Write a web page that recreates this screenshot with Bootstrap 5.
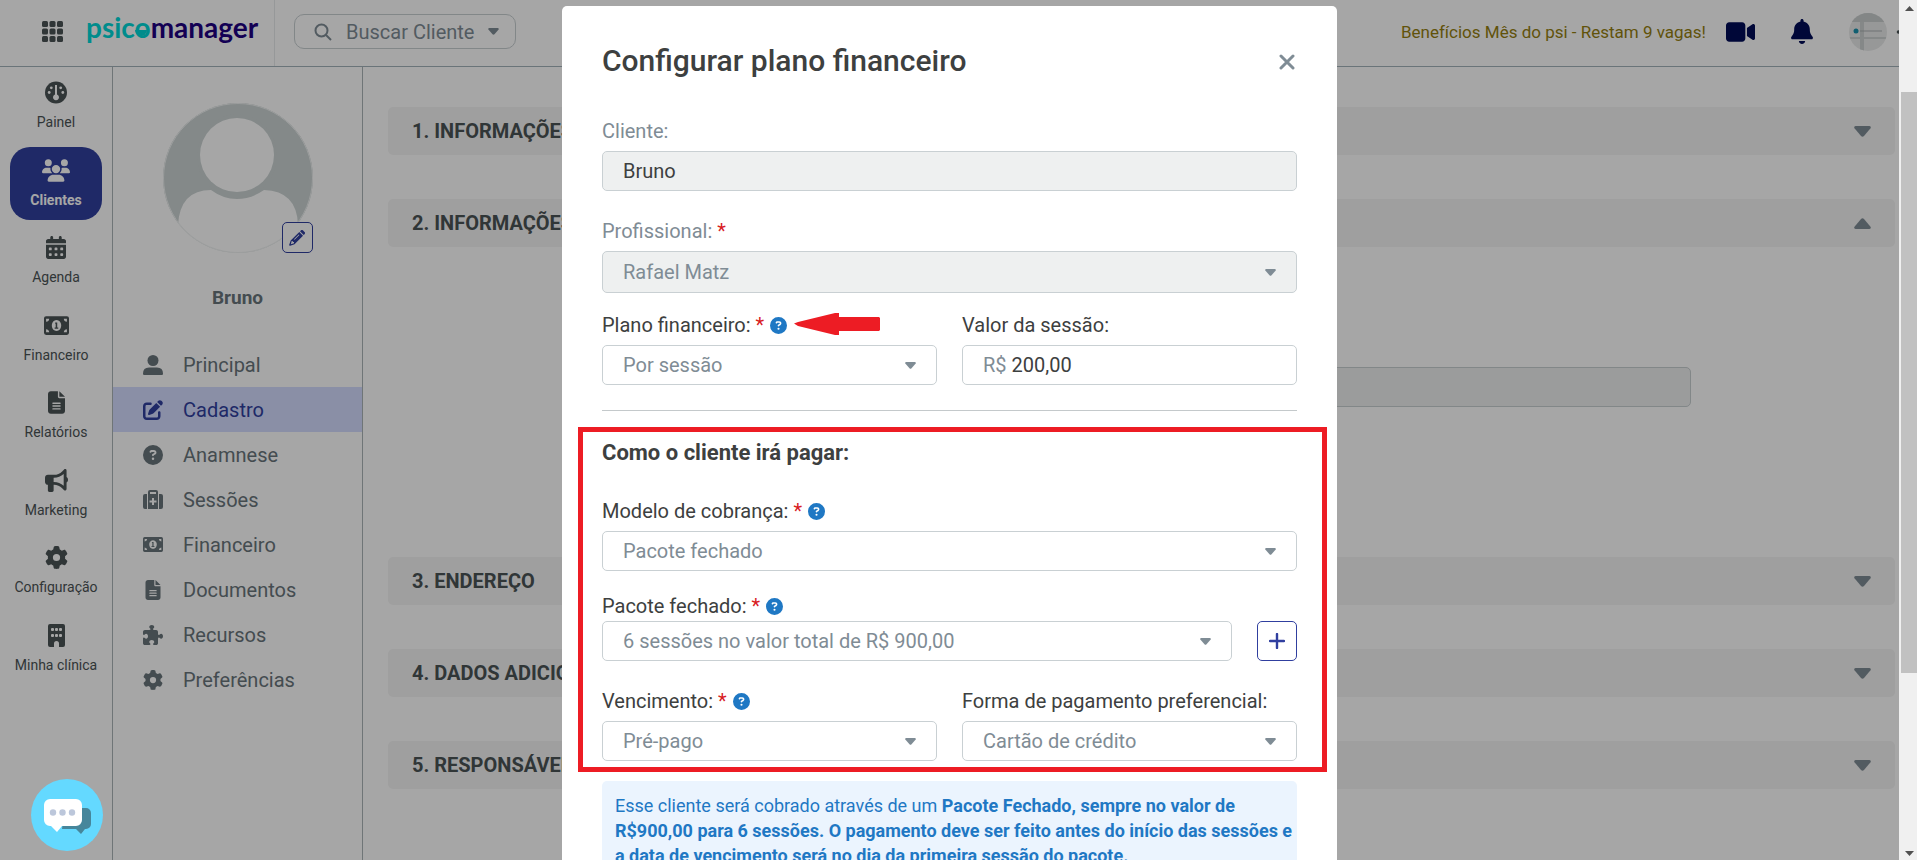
<!DOCTYPE html>
<html lang="pt-BR">
<head>
<meta charset="utf-8">
<meta name="viewport" content="width=device-width, initial-scale=1">
<title>Psicomanager - Cadastro do cliente</title>
<link rel="stylesheet" href="https://cdn.jsdelivr.net/npm/bootstrap@5.3.0/dist/css/bootstrap.min.css">
<style>
:root{--ink:#3d4040;--muted:#7f8c95;--brand:#303f9f;--line:#c9d0d3;--info:#1f78c4;--alerta:#ed1c24}
body{font-family:Roboto,"Liberation Sans",sans-serif;font-size:20px;line-height:24px;color:var(--ink)}
a{text-decoration:none;color:inherit}
svg{display:block;flex:none;fill:currentColor}
.topbar{height:67px;border-bottom:1px solid #a3b2ba}
.brandzone{width:275px;height:66px;border-right:1px solid #e6eaec;padding:0 0 4px 42px;gap:23px;color:#4b5355}
.search{width:222px;height:35px;margin:0 0 3px 19px;border:1px solid #c8cfd2;border-radius:10px;color:var(--muted);padding:0 19px;gap:14px;background:#fff}
.userzone{margin-bottom:3px}
.promo{font-size:17px;color:#968010}
.navy{color:#000c57}
.sidebar{width:113px;border-right:1px solid #abb4b7;color:#4b5355}
.sidelist{height:616px;margin-top:2px}
.sideitem{width:92px;height:73px;border-radius:20px;font-size:14px;line-height:20px;gap:8px;padding-top:2px;white-space:nowrap}
.sideitem.active{background:var(--brand);color:#fff;font-weight:700}
.profile{width:250px;border-right:1px solid #abb4b7;color:#69757b}
.photo{width:150px;margin-top:36px}
.editbtn{right:0;bottom:0;width:31px;height:31px;border:1px solid var(--brand);border-radius:5px;background:#fff;color:var(--brand)}
.person{font-size:19px;font-weight:700;margin:33px 0 32px}
.menuitem{height:45px;padding-left:30px;gap:20px}
.menuitem.active{background:#d4dcff;color:var(--brand)}
.menuitem svg{width:20px}
.secbar{width:100%;height:48px;border:0;border-radius:5px;background:#f5f5f5;color:#4b5355;font-weight:700;font-size:20px;padding:0 24px}
.secbar svg{color:var(--muted)}
.content-area{padding:40px 4px 0 25px}
.secgap{display:grid;gap:44px}
.secbody{height:310px;padding-top:120px;padding-right:204px}
.hiddenfield{height:40px;width:60%;background:#eef0f0;border:1px solid #c8cfd2;border-radius:5px}
.shade{background:rgba(0,0,0,.35);z-index:10}
.scrolltrack{width:18px;background:#f0f0f0;z-index:20;padding:6px 0 4px 2px;color:#505050}
.scrollthumb{height:581px;margin-top:81px;width:100%;background:#c1c1c1}
.stage{right:18px;z-index:15}
.plan{max-width:775px;margin:6px auto 0}
.plan .modal-content{background:#fff;color:var(--ink);border:0;border-radius:5px;padding:37px 40px 40px}
.plan h1{font-size:30px;line-height:36px;font-weight:500;margin:0 0 40px}
.plan h2{font-size:22px;line-height:26px;font-weight:700;margin:0 0 33px}
.closebtn{border:0;background:none;padding:0;color:var(--muted);width:20px;height:38px}
.labelrow{display:flex;align-items:center;gap:6px;margin-bottom:8px;height:24px}
.labelrow b{color:#d8201f;font-weight:400}
.labelrow svg{color:var(--info)}
.labelrow .pointer{color:var(--alerta);align-self:flex-start;margin-left:1px}
.soft{color:var(--muted)}
.apart{margin-top:28px}
.near{margin-top:20px}
.closer{margin-top:23px}
.tight{margin-bottom:3px}
.plan .form-control,.plan .form-select{height:40px;border:1px solid var(--line);border-radius:5px;padding:0 20px;font-size:20px;line-height:24px;color:var(--ink);box-shadow:none}
.plan .form-select{color:var(--muted);background:#fff url("data:image/svg+xml,%3Csvg xmlns='http://www.w3.org/2000/svg' viewBox='0 0 11 7'%3E%3Cpath fill='%237f8c95' d='M1 0h9q1.500 .6 .5 1.800L6.500 6.200q-1 1-2 0L.5 1.800Q-.5.600 1 0z'/%3E%3C/svg%3E") no-repeat right 20px center/11px 7px;padding-right:40px}
.plan .form-control:disabled,.plan .form-select:disabled{background-color:#eef0f0;opacity:1}
.plan .tall{height:42px}
.money{border:1px solid var(--line);border-radius:5px;height:40px;padding:0 20px;color:var(--muted);gap:5px}
.money input{border:0;padding:0;outline:0;min-width:0;background:none;color:var(--ink)}
.cols{display:grid;grid-template-columns:1fr 1fr;column-gap:25px}
.withbtn{gap:25px}
.plan hr{margin:25px 0 29px;border-top:1px solid #c4c9cb;opacity:1}
.addbtn{width:40px;height:40px;border:1px solid var(--brand);border-radius:5px;background:#fff;color:var(--brand)}
.marker{inset:-13px -30px -11px -24px;border:5px solid var(--alerta);pointer-events:none}
.notice{background:#ebf4fe;color:var(--info);border-radius:5px;margin-top:20px;padding:12px 4px 13px 13px;font-size:18px;line-height:25px}
.chat{left:31px;bottom:9px;z-index:16;width:72px;height:72px;border:0;padding:0;background:none}
</style>
</head>
<body class="vh-100 overflow-hidden bg-white">
<svg width="0" height="0" class="position-absolute" aria-hidden="true">
<symbol id="help" viewBox="0 0 512 512"><path d="M256 512A256 256 0 1 0 256 0a256 256 0 1 0 0 512zM169.800 165.300c7.900-22.300 29.100-37.300 52.800-37.300h58.300c34.900 0 63.100 28.300 63.100 63.100c0 22.600-12.100 43.500-31.700 54.800L280 264.400c-.2 13-10.900 23.600-24 23.600c-13.300 0-24-10.700-24-24V250.500c0-8.600 4.600-16.500 12.100-20.800l44.300-25.400c4.700-2.700 7.600-7.700 7.600-13.100c0-8.400-6.800-15.100-15.100-15.100H222.600c-3.400 0-6.400 2.100-7.500 5.300l-.4 1.200c-4.400 12.500-18.200 19-30.600 14.600s-19-18.200-14.600-30.600l.4-1.200zM224 352a32 32 0 1 1 64 0 32 32 0 1 1 -64 0z"/></symbol>
<symbol id="file" viewBox="0 0 384 512"><path d="M64 0C28.700 0 0 28.700 0 64V448c0 35.300 28.700 64 64 64H320c35.300 0 64-28.700 64-64V160H256c-17.700 0-32-14.300-32-32V0H64zM256 0V128H384L256 0zM112 256H272c8.800 0 16 7.200 16 16s-7.200 16-16 16H112c-8.800 0-16-7.200-16-16s7.200-16 16-16zm0 64H272c8.800 0 16 7.200 16 16s-7.200 16-16 16H112c-8.800 0-16-7.200-16-16s7.200-16 16-16zm0 64H272c8.800 0 16 7.200 16 16s-7.200 16-16 16H112c-8.800 0-16-7.200-16-16s7.200-16 16-16z"/></symbol>
<symbol id="gear" viewBox="0 0 512 512"><path d="M495.900 166.600c3.200 8.700 .5 18.400-6.400 24.600l-43.300 39.400c1.100 8.300 1.700 16.800 1.700 25.400s-.6 17.100-1.700 25.400l43.300 39.400c6.900 6.200 9.600 15.900 6.400 24.600c-4.400 11.900-9.700 23.300-15.800 34.300l-4.700 8.100c-6.600 11-14 21.400-22.100 31.200c-5.900 7.200-15.700 9.600-24.500 6.800l-55.700-17.700c-13.400 10.300-28.200 18.900-44 25.400l-12.500 57.100c-2 9.100-9 16.300-18.200 17.800c-13.800 2.300-28 3.500-42.500 3.500s-28.700-1.200-42.500-3.500c-9.200-1.500-16.200-8.700-18.200-17.800l-12.500-57.100c-15.800-6.500-30.600-15.100-44-25.400L83.100 425.900c-8.800 2.800-18.600 .3-24.500-6.800c-8.100-9.800-15.500-20.200-22.100-31.200l-4.700-8.100c-6.100-11-11.400-22.400-15.800-34.300c-3.200-8.700-.5-18.400 6.400-24.600l43.300-39.400C64.600 273.100 64 264.600 64 256s.6-17.100 1.700-25.400L22.400 191.200c-6.900-6.200-9.600-15.900-6.400-24.600c4.400-11.900 9.700-23.300 15.800-34.300l4.700-8.100c6.600-11 14-21.400 22.100-31.200c5.900-7.200 15.700-9.600 24.500-6.800l55.700 17.700c13.400-10.300 28.200-18.900 44-25.400l12.500-57.100c2-9.100 9-16.300 18.200-17.800C227.300 1.200 241.500 0 256 0s28.700 1.200 42.500 3.500c9.200 1.500 16.200 8.700 18.200 17.800l12.500 57.100c15.800 6.500 30.600 15.100 44 25.400l55.700-17.700c8.800-2.800 18.600-.3 24.500 6.800c8.100 9.800 15.500 20.200 22.100 31.200l4.700 8.100c6.100 11 11.400 22.400 15.800 34.300zM256 336a80 80 0 1 0 0-160 80 80 0 1 0 0 160z"/></symbol>
<symbol id="cash" viewBox="0 0 24 18"><path fill-rule="evenodd" d="M2 0h20a2 2 0 0 1 2 2v14a2 2 0 0 1-2 2H2a2 2 0 0 1-2-2V2a2 2 0 0 1 2-2zm0 5.500Q4.800 5.300 5 2.500H2zm0 7v3h3Q4.800 12.700 2 12.500zM22 5.500v-3h-3Q19.200 5.300 22 5.500zM22 12.500Q19.200 12.700 19 15.500h3zM12 3.800a4.500 5.200 0 1 0 .01 0zM10.700 6h2v4.800h1v1.300h-3.500v-1.300h1V7.300h-.5z"/></symbol>
<symbol id="down" viewBox="0 0 17 11"><path d="M1.500 0h14q2 .8 1 2.200L10 10q-1.500 1.500-3 0L.5 2.200Q-.5.800 1.500 0z"/></symbol>
</svg>

<div class="d-flex h-100">
<div class="flex-grow-1 d-flex flex-column position-relative overflow-hidden">
  <header class="topbar d-flex align-items-center flex-shrink-0">
    <div class="brandzone d-flex align-items-center">
      <svg width="21" height="21" viewBox="0 0 21 21" aria-hidden="true"><g><rect width="6" height="6" rx="1.500"/><rect x="7.500" width="6" height="6" rx="1.500"/><rect x="15" width="6" height="6" rx="1.500"/><rect y="7.500" width="6" height="6" rx="1.500"/><rect x="7.500" y="7.500" width="6" height="6" rx="1.500"/><rect x="15" y="7.500" width="6" height="6" rx="1.500"/><rect y="15" width="6" height="6" rx="1.500"/><rect x="7.500" y="15" width="6" height="6" rx="1.500"/><rect x="15" y="15" width="6" height="6" rx="1.500"/></g></svg>
      <a href="#" aria-label="psicomanager"><svg width="180" height="44" viewBox="0 0 180 44" font-family="Lato,sans-serif" font-size="28" font-weight="700"><text y="29"><tspan fill="#00d7d7">psico</tspan><tspan fill="#200081">manager</tspan></text><path fill="#00d7d7" d="M49 21h12a6 6 0 0 1-12 0z"/></svg></a>
    </div>
    <button class="search d-flex align-items-center" type="button">
      <svg width="18" height="18" viewBox="0 0 18 18" stroke="currentColor" stroke-width="2"><circle cx="7.500" cy="7.500" r="6" fill="none"/><path d="M12 12l5 5"/></svg>
      <span class="flex-grow-1 text-start text-nowrap">Buscar Cliente</span>
      <svg width="11" height="7"><use href="#down"/></svg>
    </button>
    <div class="userzone ms-auto d-flex align-items-center">
      <a href="#" class="promo">Benefícios Mês do psi - Restam 9 vagas!</a>
      <a href="#" class="navy ms-3" aria-label="Vídeo"><svg class="ms-1 me-3" width="29" height="26" viewBox="0 0 576 512"><path d="M0 128C0 92.700 28.700 64 64 64H320c35.300 0 64 28.700 64 64V384c0 35.300-28.700 64-64 64H64c-35.300 0-64-28.700-64-64V128zM559.100 99.800c10.400 5.600 16.900 16.400 16.900 28.200V384c0 11.800-6.500 22.600-16.900 28.200s-23 5-32.900-1.600l-96-64L416 337.100V174.900l14.200-9.500 96-64c9.800-6.500 22.400-7.200 32.900-1.600z"/></svg></a>
      <a href="#" class="navy px-3 mx-1" aria-label="Notificações"><svg width="22" height="25" viewBox="0 0 448 512"><path d="M224 0c-17.700 0-32 14.300-32 32V51.200C119 66 64 130.600 64 208v18.800c0 47-17.300 92.400-48.500 127.600l-7.400 8.300c-8.400 9.400-10.400 22.900-5.300 34.400S19.400 416 32 416H416c12.600 0 24-7.400 29.200-18.900s3.100-25-5.300-34.400l-7.400-8.300C401.300 319.200 384 273.900 384 226.800V208c0-77.400-55-142-128-156.800V32c0-17.700-14.300-32-32-32zm45.300 493.300c12-12 18.700-28.300 18.700-45.300H160c0 17 6.700 33.300 18.700 45.300s28.300 18.700 45.300 18.700s33.300-6.700 45.300-18.700z"/></svg></a>
      <a href="#" class="ms-3" aria-label="Conta"><svg width="50" height="38" viewBox="0 0 50 38"><clipPath id="av"><circle cx="19" cy="19" r="19"/></clipPath><g clip-path="url(#av)"><path fill="#e9eaea" d="M0 0h38v38H0z"/><path fill="#c9cece" d="M0 0h38v9H0z"/><path fill="#cdd1d1" d="M11 9h4v29h-4zM0 24h38v2H0z"/><circle cx="7" cy="18" r="2.500" fill="#1b93ae"/><path fill="#a9b0b1" d="M11 17.500h22v1H11z"/></g><circle cx="49.500" cy="19" r="1.800" fill="#4b5355"/></svg></a>
    </div>
  </header>
  <div class="d-flex flex-grow-1">
    <nav class="sidebar flex-shrink-0">
      <div class="sidelist d-flex flex-column align-items-center justify-content-between">
        <a href="#" class="sideitem d-flex flex-column align-items-center justify-content-center"><svg width="22" height="23" viewBox="0 0 22 22"><circle cx="11" cy="11" r="11"/><g fill="#fff"><path d="M10 3.500h2v9.500a3 3 0 1 1-2 0z"/><circle cx="6.300" cy="6.300" r="1.400"/><circle cx="15.700" cy="6.300" r="1.400"/><circle cx="4.200" cy="11" r="1.400"/><circle cx="17.800" cy="11" r="1.400"/></g></svg>Painel</a>
        <a href="#" class="sideitem active d-flex flex-column align-items-center justify-content-center"><svg width="28" height="23" viewBox="0 0 640 512"><path d="M144 0a80 80 0 1 1 0 160A80 80 0 1 1 144 0zM512 0a80 80 0 1 1 0 160A80 80 0 1 1 512 0zM0 298.700C0 239.800 47.800 192 106.700 192h42.700c15.900 0 31 3.500 44.600 9.700c-1.300 7.200-1.900 14.700-1.900 22.300c0 38.200 16.800 72.500 43.300 96H21.300C9.600 320 0 310.400 0 298.700zM405.300 320c26.600-23.500 43.300-57.800 43.300-96c0-7.600-.7-15-1.900-22.300c13.600-6.300 28.700-9.700 44.600-9.700h42.700C592.200 192 640 239.800 640 298.700c0 11.800-9.600 21.300-21.300 21.300H405.300zM224 224a96 96 0 1 1 192 0 96 96 0 1 1 -192 0zM128 485.300C128 411.700 187.700 352 261.300 352H378.700C452.300 352 512 411.700 512 485.300c0 14.700-11.900 26.700-26.700 26.700H154.700c-14.700 0-26.700-11.900-26.700-26.700z"/></svg>Clientes</a>
        <a href="#" class="sideitem d-flex flex-column align-items-center justify-content-center"><svg width="20" height="23" viewBox="0 0 448 512"><path d="M128 0c17.700 0 32 14.300 32 32V64H288V32c0-17.700 14.300-32 32-32s32 14.300 32 32V64h48c26.500 0 48 21.500 48 48v48H0V112C0 85.500 21.500 64 48 64H96V32c0-17.700 14.300-32 32-32zM0 192H448V464c0 26.500-21.500 48-48 48H48c-26.500 0-48-21.500-48-48V192zm64 80v32c0 8.800 7.200 16 16 16h32c8.800 0 16-7.200 16-16V272c0-8.800-7.200-16-16-16H80c-8.800 0-16 7.200-16 16zm128 0v32c0 8.800 7.200 16 16 16h32c8.800 0 16-7.200 16-16V272c0-8.800-7.200-16-16-16H208c-8.800 0-16 7.200-16 16zm144-16c-8.800 0-16 7.200-16 16v32c0 8.800 7.200 16 16 16h32c8.800 0 16-7.200 16-16V272c0-8.800-7.200-16-16-16H336zM64 400v32c0 8.800 7.200 16 16 16h32c8.800 0 16-7.200 16-16V400c0-8.800-7.200-16-16-16H80c-8.800 0-16 7.200-16 16zm144-16c-8.800 0-16 7.200-16 16v32c0 8.800 7.200 16 16 16h32c8.800 0 16-7.200 16-16V400c0-8.800-7.200-16-16-16H208zm112 16v32c0 8.800 7.200 16 16 16h32c8.800 0 16-7.200 16-16V400c0-8.800-7.200-16-16-16H336c-8.800 0-16 7.200-16 16z"/></svg>Agenda</a>
        <a href="#" class="sideitem d-flex flex-column align-items-center justify-content-center"><svg width="25" height="23"><use href="#cash" y="2" width="25" height="19"/></svg>Financeiro</a>
        <a href="#" class="sideitem d-flex flex-column align-items-center justify-content-center"><svg width="17" height="23"><use href="#file"/></svg>Relatórios</a>
        <a href="#" class="sideitem d-flex flex-column align-items-center justify-content-center"><svg width="23" height="23" viewBox="0 0 512 512"><path d="M480 32c0-12.900-7.800-24.600-19.800-29.600s-25.700-2.200-34.900 6.900L381.700 53c-48 48-113.100 75-181 75H64c-35.300 0-64 28.700-64 64v96c0 35.300 28.700 64 64 64v128c0 17.700 14.300 32 32 32h64c17.700 0 32-14.300 32-32V352h8.700c67.900 0 133 27 181 75l43.600 43.600c9.200 9.200 22.900 11.900 34.900 6.900s19.800-16.600 19.800-29.600V300.400c18.600-8.800 32-32.500 32-60.400s-13.400-51.600-32-60.400V32zm-64 76.700V371.300C357.200 317.800 280.500 288 200.700 288H192V192h8.700c79.800 0 156.500-29.800 215.300-83.300z"/></svg>Marketing</a>
        <a href="#" class="sideitem d-flex flex-column align-items-center justify-content-center"><svg width="23" height="23"><use href="#gear"/></svg>Configuração</a>
        <a href="#" class="sideitem d-flex flex-column align-items-center justify-content-center"><svg width="17" height="23" viewBox="0 0 17 23"><path d="M2 0h13a2 2 0 0 1 2 2v19a2 2 0 0 1-2 2h-4v-3.500a2.500 2.500 0 0 0-5 0V23H2a2 2 0 0 1-2-2V2a2 2 0 0 1 2-2z"/><g fill="#fff"><rect x="3" y="4" width="3" height="3" rx="1"/><rect x="7" y="4" width="3" height="3" rx="1"/><rect x="11" y="4" width="3" height="3" rx="1"/><rect x="3" y="10" width="3" height="3" rx="1"/><rect x="7" y="10" width="3" height="3" rx="1"/><rect x="11" y="10" width="3" height="3" rx="1"/></g></svg>Minha clínica</a>
      </div>
    </nav>
    <aside class="profile flex-shrink-0">
      <div class="photo mx-auto position-relative">
        <svg width="150" height="150" viewBox="0 0 150 150"><clipPath id="ph"><circle cx="75" cy="75" r="75"/></clipPath><g clip-path="url(#ph)"><path fill="#cbd3d3" d="M0 0h150v150H0z"/><path fill="#fff" d="M15 150v-28Q17 87 48 87Q60 96 74 96T101 87Q134 88 135 122v28z"/><ellipse cx="74" cy="53" rx="40" ry="42" fill="#cbd3d3"/><ellipse cx="74" cy="52" rx="37" ry="37" fill="#fff"/></g><circle cx="75" cy="75" r="74.500" fill="none" stroke="#eff2f2"/></svg>
        <button type="button" class="editbtn position-absolute d-flex align-items-center justify-content-center p-0" aria-label="Editar foto"><svg width="16" height="16" viewBox="0 0 16 16"><path fill-rule="evenodd" d="M11 1.300l.8-.8a1.600 1.600 0 0 1 2.300 0l1.400 1.400a1.600 1.600 0 0 1 0 2.300l-.8.8zM10.300 2l3.700 3.700-8.500 8.500-4.300 1.500q-1.200.2-1-.9l1.500-4.300zM2.700 11l-.9 3.200 3.200-.9v-1.200H3.800V11zm2.900-1.200 4.800-4.800-.6-.6L5 9.200z"/></svg></button>
      </div>
      <div class="person text-center">Bruno</div>
      <nav>
        <a href="#" class="menuitem d-flex align-items-center"><svg height="20" viewBox="0 0 20 20"><circle cx="10" cy="5.500" r="5.500"/><path d="M0 18.500Q0 12.500 6 12.500h8q6 0 6 6Q20 20 19 20H1q-1 0-1-1.500z"/></svg>Principal</a>
        <a href="#" class="menuitem active d-flex align-items-center"><svg height="20" viewBox="0 0 512 512"><path d="M471.600 21.700c-21.900-21.900-57.300-21.900-79.200 0L362.300 51.700l97.900 97.900 30.100-30.100c21.900-21.900 21.900-57.300 0-79.200L471.600 21.700zm-299.200 220c-6.100 6.100-10.800 13.600-13.500 21.900l-29.600 88.800c-2.900 8.600-.6 18.100 5.800 24.600s15.900 8.700 24.600 5.800l88.800-29.600c8.200-2.700 15.700-7.400 21.900-13.500L437.700 172.300 339.700 74.300 172.400 241.700zM96 64C43 64 0 107 0 160V416c0 53 43 96 96 96H352c53 0 96-43 96-96V320c0-17.700-14.300-32-32-32s-32 14.300-32 32v96c0 17.700-14.300 32-32 32H96c-17.700 0-32-14.300-32-32V160c0-17.700 14.300-32 32-32h96c17.700 0 32-14.300 32-32s-14.300-32-32-32H96z"/></svg>Cadastro</a>
        <a href="#" class="menuitem d-flex align-items-center"><svg height="20"><use href="#help"/></svg>Anamnese</a>
        <a href="#" class="menuitem d-flex align-items-center"><svg height="20" viewBox="0 0 20 20"><path fill-rule="evenodd" d="M5 4V2a2 2 0 0 1 2-2h6a2 2 0 0 1 2 2v17H5zM7 4h6V2H7zM9 8v2.500H6.500v2H9V15h2v-2.500h2.500v-2H11V8zM2 4h2v15H2a2 2 0 0 1-2-2V6a2 2 0 0 1 2-2zM16 4h2a2 2 0 0 1 2 2v11a2 2 0 0 1-2 2h-2z"/></svg>Sessões</a>
        <a href="#" class="menuitem d-flex align-items-center"><svg height="15"><use href="#cash"/></svg>Financeiro</a>
        <a href="#" class="menuitem d-flex align-items-center"><svg height="20"><use href="#file"/></svg>Documentos</a>
        <a href="#" class="menuitem d-flex align-items-center"><svg height="20" viewBox="0 0 512 512"><path d="M192 104.800c0-9.200-5.800-17.300-13.200-22.800C167.200 73.300 160 61.300 160 48c0-26.500 28.700-48 64-48s64 21.500 64 48c0 13.300-7.200 25.300-18.800 34c-7.400 5.500-13.200 13.600-13.200 22.800c0 12.800 10.400 23.200 23.200 23.200H336c26.500 0 48 21.500 48 48v56.800c0 12.800 10.400 23.200 23.200 23.200c9.200 0 17.300-5.800 22.800-13.200c8.700-11.600 20.700-18.800 34-18.800c26.500 0 48 28.700 48 64s-21.500 64-48 64c-13.300 0-25.300-7.200-34-18.800c-5.500-7.400-13.600-13.200-22.800-13.200c-12.800 0-23.200 10.400-23.200 23.200V464c0 26.500-21.500 48-48 48H279.200c-12.800 0-23.200-10.400-23.200-23.200c0-9.200 5.800-17.300 13.200-22.800c11.600-8.700 18.800-20.700 18.800-34c0-26.500-28.700-48-64-48s-64 21.500-64 48c0 13.300 7.200 25.300 18.800 34c7.400 5.500 13.200 13.600 13.200 22.800c0 12.800-10.400 23.200-23.200 23.200H48c-26.500 0-48-21.500-48-48V343.200C0 330.400 10.400 320 23.200 320c9.200 0 17.300 5.800 22.800 13.200C54.700 344.800 66.700 352 80 352c26.500 0 48-28.700 48-64s-21.500-64-48-64c-13.300 0-25.300 7.200-34 18.800C40.500 250.200 32.400 256 23.200 256C10.400 256 0 245.600 0 232.800V176c0-26.500 21.500-48 48-48H168.800c12.800 0 23.200-10.400 23.200-23.200z"/></svg>Recursos</a>
        <a href="#" class="menuitem d-flex align-items-center"><svg height="20"><use href="#gear"/></svg>Preferências</a>
      </nav>
    </aside>
    <main class="content-area flex-grow-1">
      <div class="secgap">
        <button type="button" class="secbar d-flex align-items-center justify-content-between">1. INFORMAÇÕES<svg width="17" height="11"><use href="#down"/></svg></button>
        <button type="button" class="secbar d-flex align-items-center justify-content-between">2. INFORMAÇÕES<svg width="17" height="11" viewBox="0 0 17 11"><path d="M1.500 11h14q2-.8 1-2.200L10 1Q8.500-.5 7 1L.5 8.800Q-.5 10.200 1.500 11z"/></svg></button>
      </div>
      <div class="secbody"><div class="hiddenfield ms-auto"></div></div>
      <div class="secgap">
        <button type="button" class="secbar d-flex align-items-center justify-content-between">3. ENDEREÇO<svg width="17" height="11"><use href="#down"/></svg></button>
        <button type="button" class="secbar d-flex align-items-center justify-content-between">4. DADOS ADICIONAIS<svg width="17" height="11"><use href="#down"/></svg></button>
        <button type="button" class="secbar d-flex align-items-center justify-content-between">5. RESPONSÁVEL<svg width="17" height="11"><use href="#down"/></svg></button>
      </div>
    </main>
  </div>
  <div class="shade position-absolute top-0 bottom-0 start-0 end-0"></div>
</div>
<div class="scrolltrack flex-shrink-0 d-flex flex-column align-items-center" aria-hidden="true">
  <svg width="9" height="5" viewBox="0 0 9 5"><path d="M0 5l4.500-5L9 5z"/></svg>
  <div class="scrollthumb"></div>
  <svg class="mt-auto" width="9" height="5" viewBox="0 0 9 5"><path d="M0 0l4.500 5L9 0z"/></svg>
</div>
</div>

<div class="stage position-fixed top-0 bottom-0 start-0 overflow-hidden" role="dialog" aria-labelledby="titulo">
  <div class="plan">
    <div class="modal-content">
      <div class="d-flex justify-content-between">
        <h1 id="titulo">Configurar plano financeiro</h1>
        <button type="button" class="closebtn d-flex align-items-center justify-content-center" aria-label="Fechar"><svg width="16" height="16" viewBox="0 0 16 16"><path d="M2 2l12 12M14 2L2 14" stroke="currentColor" stroke-width="3" stroke-linecap="round"/></svg></button>
      </div>
      <div class="labelrow soft"><label for="cliente">Cliente:</label></div>
      <input id="cliente" class="form-control" value="Bruno" disabled>
      <div class="labelrow soft apart"><label for="prof">Profissional: <b>*</b></label></div>
      <select id="prof" class="form-select tall" disabled><option>Rafael Matz</option></select>
      <div class="cols near">
        <div>
          <div class="labelrow"><label for="plano">Plano financeiro: <b>*</b></label><svg width="17" height="17"><use href="#help"/></svg><svg class="pointer" width="86" height="22" viewBox="0 0 86 22"><path d="M0 10.500 4 9 41 0h4v4h40l1 1v12l-1 1H45v4h-4L4 13z"/></svg></div>
          <select id="plano" class="form-select"><option>Por sessão</option></select>
        </div>
        <div>
          <div class="labelrow"><label for="valor">Valor da sessão:</label></div>
          <div class="money d-flex align-items-center"><span>R$</span><input id="valor" class="flex-grow-1" value="200,00"></div>
        </div>
      </div>
      <hr>
      <section class="position-relative">
        <div class="marker position-absolute"></div>
        <h2>Como o cliente irá pagar:</h2>
        <div class="labelrow"><label for="modelo">Modelo de cobrança: <b>*</b></label><svg width="17" height="17"><use href="#help"/></svg></div>
        <select id="modelo" class="form-select"><option>Pacote fechado</option></select>
        <div class="labelrow tight closer"><label for="pacote">Pacote fechado: <b>*</b></label><svg width="17" height="17"><use href="#help"/></svg></div>
        <div class="withbtn d-flex">
          <select id="pacote" class="form-select"><option>6 sessões no valor total de R$ 900,00</option></select>
          <button type="button" class="addbtn flex-shrink-0 d-flex align-items-center justify-content-center p-0" aria-label="Adicionar pacote"><svg width="16" height="16" viewBox="0 0 16 16"><path d="M8 1v14M1 8h14" stroke="currentColor" stroke-width="2.400" stroke-linecap="round"/></svg></button>
        </div>
        <div class="cols apart">
          <div>
            <div class="labelrow"><label for="venc">Vencimento: <b>*</b></label><svg width="17" height="17"><use href="#help"/></svg></div>
            <select id="venc" class="form-select"><option>Pré-pago</option></select>
          </div>
          <div>
            <div class="labelrow"><label for="forma">Forma de pagamento preferencial:</label></div>
            <select id="forma" class="form-select"><option>Cartão de crédito</option></select>
          </div>
        </div>
      </section>
      <div class="notice">Esse cliente será cobrado através de um <strong>Pacote Fechado, sempre no valor de R$900,00 para 6 sessões. O pagamento deve ser feito antes do início das sessões e a data de vencimento será no dia da primeira sessão do pacote.</strong></div>
    </div>
  </div>
</div>
<button type="button" class="chat position-fixed" aria-label="Abrir chat"><svg width="72" height="72" viewBox="0 0 72 72"><circle cx="36" cy="36" r="36" fill="#64d9ff"/><path fill="#46869b" d="M34 29h21a5 5 0 0 1 5 5v11a5 5 0 0 1-5 5h-1l-4 5-5-5H31z"/><path fill="#fff" d="M19 20h26a6 6 0 0 1 6 6v15a6 6 0 0 1-6 6H31l-5 6-6-6h-1a6 6 0 0 1-6-6V26a6 6 0 0 1 6-6z"/><g fill="#bcc7db"><circle cx="22" cy="33.500" r="3.200"/><circle cx="31.500" cy="33.500" r="3.200"/><circle cx="41" cy="33.500" r="3.200"/></g></svg></button>
<script src="https://cdn.jsdelivr.net/npm/bootstrap@5.3.0/dist/js/bootstrap.bundle.min.js"></script>
</body>
</html>
